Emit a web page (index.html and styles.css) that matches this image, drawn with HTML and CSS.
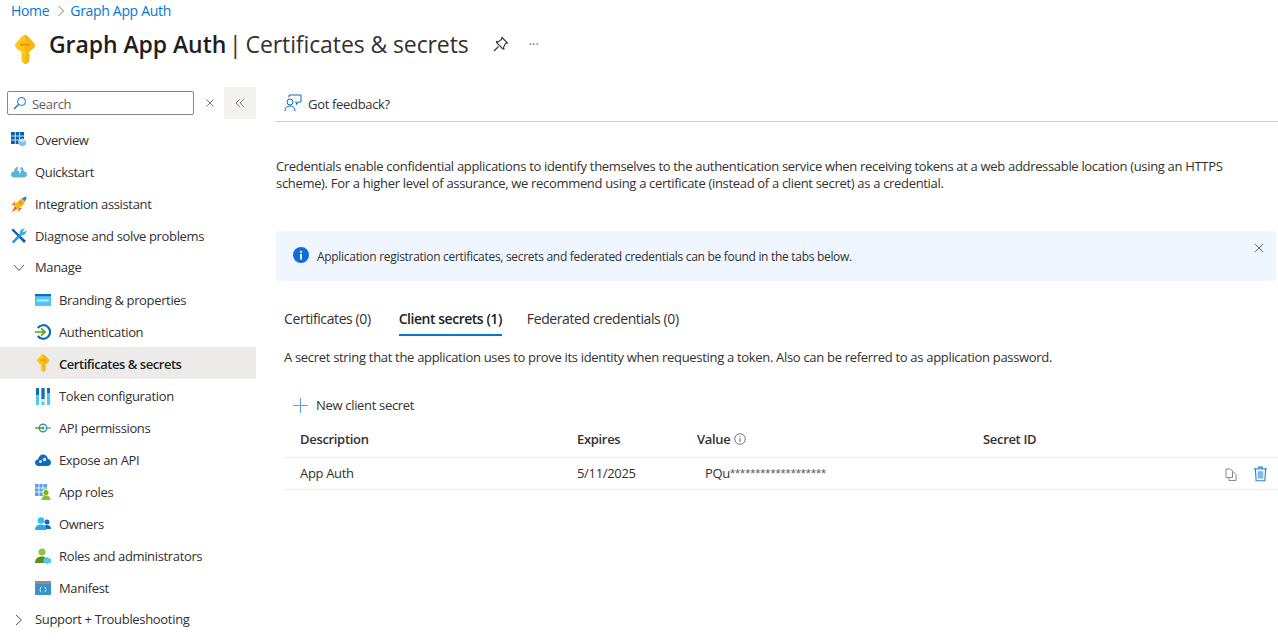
FILE: index.html
```html
<!DOCTYPE html>
<html lang="en">
<head>
<meta charset="utf-8">
<title>Graph App Auth | Certificates &amp; secrets</title>
<link rel="stylesheet" href="styles.css">
</head>
<body>
<svg class="defs" width="0" height="0" aria-hidden="true">
  <defs>
    <symbol id="key" viewBox="0 0 20 29">
      <path fill="#ffc61c" d="M10 0 C11 0 12 .6 13 1.600 L18.500 7.500 C20.500 9.700 20.500 11.500 18.500 13.300 C17 14.700 15.500 16 14 16.800 V19 L15 20.200 L14 21.500 L15 22.800 L14 24 V26.500 L11.500 29 H9.500 L6.500 26.500 V16.800 C4.500 16 3 14.700 1.500 13.300 C-.5 11.500 -.5 9.700 1.500 7.500 L7 1.600 C8 .6 9 0 10 0 Z"/>
      <path fill="#f6a70a" d="M10 0 C11 0 12 .6 13 1.600 L18.500 7.500 C20.500 9.700 20.500 11.500 18.500 13.300 C17 14.700 15.500 16 14 16.800 V19 L15 20.200 L14 21.500 L15 22.800 L14 24 V26.500 L11.500 29 H10 Z" opacity=".55"/>
      <rect x="5" y="8.500" width="10" height="2.500" fill="#e99f0a"/>
    </symbol>
  </defs>
</svg>

<header class="page-head">
  <nav class="crumbs">
    <a class="crumb">Home</a>
    <svg class="crumb-sep" viewBox="0 0 8 12"><path d="M1.500 1 L6.500 6 L1.500 11" fill="none" stroke="#777" stroke-width="1"/></svg>
    <a class="crumb">Graph App Auth</a>
  </nav>
  <div class="title-row">
    <svg class="title-key"><use href="#key"/></svg>
    <h1 class="title"><b class="title-app">Graph App Auth</b> <span class="title-sep">|</span> Certificates &amp; secrets</h1>
    <svg class="pin" viewBox="0 0 16 16"><path d="M1 15 L5.500 10.500 M9 1.500 L14.500 7 L12.500 7.500 L10.500 11.500 L11 13 L9.800 13 L3.500 6.500 L3.500 5.500 L5 6 L8.500 3.500 Z" fill="none" stroke="#333" stroke-width="1.100"/></svg>
    <span class="more">···</span>
  </div>
</header>

<div class="layout">
  <aside class="side">
    <div class="search-row">
      <div class="search">
        <svg class="search-ico" viewBox="0 0 14 14"><circle cx="8.500" cy="5.500" r="4" fill="none" stroke="#0f6cbd" stroke-width="1"/><path d="M5.500 8.500 L1 13" stroke="#0f6cbd" stroke-width="1.200"/></svg>
        <span class="search-text">Search</span>
      </div>
      <svg class="search-x" viewBox="0 0 10 10"><path d="M1.500 1.500 L8.500 8.500 M8.500 1.500 L1.500 8.500" stroke="#777" stroke-width="1"/></svg>
      <div class="collapse"><svg viewBox="0 0 10 10" width="10" height="10"><path d="M5 1 L1 5 L5 9 M9 1 L5 5 L9 9" fill="none" stroke="#888" stroke-width="1"/></svg></div>
    </div>

    <ul class="menu">
      <li class="item">
        <svg class="ico" viewBox="0 0 16 16"><rect x="0" y="0" width="13" height="12" fill="#0063b1"/><path d="M4.300 0V12M8.600 0V12M0 4H13M0 8H13" stroke="#fff" stroke-width=".8"/><path d="M11.500 6.500 L15.800 8.500 V13 L11.500 15 L7.500 13 V8.500 Z" fill="#fff"/><path d="M11.500 7.500 L15 9 V12.800 L11.500 14.500 L8 12.800 V9 Z" fill="#7fc3e8"/><path d="M8 9 L11.500 10.600 L15 9 L11.500 7.500 Z" fill="#b4e0f5"/></svg>
        <span>Overview</span>
      </li>
      <li class="item">
        <svg class="ico" viewBox="0 0 16 16"><path d="M3.500 13.500 C1.200 13.500 0 12 0 10.500 C0 8.800 1.300 7.500 3 7.500 C3.300 5 5 3 7 2.800 L6.500 7 H8.500 L8 10.500 L11 5.500 H9 L9.800 2.800 C11.500 3.300 12.700 5 13 7.500 C14.700 7.500 16 8.800 16 10.500 C16 12 14.800 13.500 12.500 13.500 Z" fill="#59b4d9"/></svg>
        <span>Quickstart</span>
      </li>
      <li class="item">
        <svg class="ico ico-tall" viewBox="0 0 16 17"><path d="M4 5.500 L.5 9 L4.500 9.500 Z M11 12 L7.500 16 L7 12 Z" fill="#f26d21"/><path d="M4 10 L6.500 12.500 L.5 16.500 Z" fill="#ef6c1a"/><path d="M15.500 .5 C11 1.500 6.500 4.500 3.500 9.500 L7 13 C12 10 15 6 15.500 .5 Z" fill="#fcb714"/><path d="M15.500 .5 C14 .8 12.500 1.400 11 2.300 L13.800 5.200 C14.800 3.800 15.300 2 15.500 .5 Z" fill="#1f7fd1"/><circle cx="9.500" cy="6.800" r="1.400" fill="#e88b00"/></svg>
        <span>Integration assistant</span>
      </li>
      <li class="item">
        <svg class="ico" viewBox="0 0 16 16"><path d="M1.500 3 L3 1.500 L15 13 L13 15 Z" fill="#0a5fa8"/><path d="M.5 2 L2 .5 L4 2.500 L2.500 4 Z" fill="#0a5fa8"/><path d="M2.500 15.500 L.8 13.800 L9 5.500 L10.800 7.300 Z" fill="#1f9bd7"/><path d="M9 6 C8 3 10.500 0 14 .8 L11.800 3 L13 4.200 L15.200 2 C16 5.500 13 8 10.500 7 Z" fill="#3cb1e4"/></svg>
        <span>Diagnose and solve problems</span>
      </li>
      <li class="item item-group">
        <svg class="chev" viewBox="0 0 12 8"><path d="M1 1 L6 6.500 L11 1" fill="none" stroke="#555" stroke-width="1"/></svg>
        <span>Manage</span>
      </li>
      <li class="item sub">
        <svg class="ico" viewBox="0 0 16 16"><rect x="0" y="2" width="16" height="12" fill="#50c7f0"/><rect x="0" y="2" width="16" height="2.200" fill="#0f6cbd"/><rect x="2" y="7.500" width="12" height="2" fill="#b8ecfa"/></svg>
        <span>Branding &amp; properties</span>
      </li>
      <li class="item sub">
        <svg class="ico" viewBox="0 0 16 16"><path d="M2.800 4 A6.800 6.800 0 1 1 2.800 12" fill="none" stroke="#0f6cbd" stroke-width="2.200"/><path d="M0 8 H9.500 M6 4.300 L10 8 L6 11.700" fill="none" stroke="#57a300" stroke-width="1.700"/></svg>
        <span>Authentication</span>
      </li>
      <li class="item sub item-on">
        <svg class="ico ico-key"><use href="#key"/></svg>
        <span>Certificates &amp; secrets</span>
      </li>
      <li class="item sub">
        <svg class="ico ico-tall" viewBox="0 0 16 17"><rect x="1" y="0" width="3" height="17" fill="#50c7f0"/><rect x="1" y="0" width="3" height="7" fill="#0f6cbd"/><rect x="6.500" y="0" width="3" height="17" fill="#50c7f0"/><rect x="6.500" y="0" width="3" height="11" fill="#0f6cbd"/><rect x="6.500" y="11" width="3" height="3" fill="#c7ecf8"/><rect x="12" y="0" width="3" height="17" fill="#50c7f0"/><rect x="12" y="0" width="3" height="5" fill="#0f6cbd"/></svg>
        <span>Token configuration</span>
      </li>
      <li class="item sub">
        <svg class="ico" viewBox="0 0 16 16"><path d="M10 8 H16" stroke="#3a9bd5" stroke-width="1.200"/><circle cx="8" cy="8" r="3.800" fill="#fff" stroke="#2f8fcf" stroke-width="1.400"/><path d="M0 8 H8" stroke="#57a300" stroke-width="1.500"/><circle cx="8" cy="8" r="1.500" fill="#57a300"/></svg>
        <span>API permissions</span>
      </li>
      <li class="item sub">
        <svg class="ico" viewBox="0 0 16 16"><path d="M3.500 14 C1 14 0 12 0 10.500 C0 8.500 1.500 7.500 3 7.500 C3.500 4.500 5.500 2.500 8 2.500 C10.500 2.500 12.500 4.500 13 7 C14.500 7 16 8.500 16 10.500 C16 12.500 14.500 14 12.500 14 Z" fill="#0f6cbd"/><circle cx="5.500" cy="9.500" r="1.500" fill="#c7ecf8"/><circle cx="9.500" cy="7.500" r="1.700" fill="#c7ecf8"/></svg>
        <span>Expose an API</span>
      </li>
      <li class="item sub">
        <svg class="ico" viewBox="0 0 16 16"><rect x="0" y="0" width="12" height="12" fill="#5e9ce6"/><path d="M4 0V12M8 0V12M0 4H12M0 8H12" stroke="#fff" stroke-width=".8"/><circle cx="11" cy="8.500" r="3.200" fill="#fff"/><circle cx="11" cy="8.500" r="2.500" fill="#7ab800"/><path d="M6.500 16 C6.500 13 8.500 11.500 11 11.500 C13.500 11.500 15.500 13 15.500 16 Z" fill="#86bf30"/></svg>
        <span>App roles</span>
      </li>
      <li class="item sub">
        <svg class="ico" viewBox="0 0 16 16"><circle cx="12" cy="6" r="2.500" fill="#0f6cbd"/><path d="M8 13 C8 10 10 9 12 9 C14 9 16 10 16 13 Z" fill="#0f6cbd"/><circle cx="6" cy="4.500" r="3.300" fill="#32bfe8"/><path d="M0 14 C0 10 3 8.500 6 8.500 C9 8.500 11.500 10 11.500 14 Z" fill="#32a8e0"/></svg>
        <span>Owners</span>
      </li>
      <li class="item sub">
        <svg class="ico" viewBox="0 0 16 16"><circle cx="7" cy="4" r="3.500" fill="#8cc63f"/><path d="M0 15 C0 10.500 3 8.500 7 8.500 C10 8.500 12 10 12.500 15 Z" fill="#5b8f1c"/><path d="M12 9 L16 11 V14.500 L12 16 L8.500 14.500 V11 Z" fill="#50c7f0"/></svg>
        <span>Roles and administrators</span>
      </li>
      <li class="item sub">
        <svg class="ico" viewBox="0 0 16 16"><rect x="0" y="1" width="16" height="14" fill="#3c91c6"/><rect x="0" y="1" width="16" height="3" fill="#8a8f94"/><path d="M6.500 7 L5.500 7.500 V9 L5 9.500 L5.500 10 V11.500 L6.500 12 M9.500 7 L10.500 7.500 V9 L11 9.500 L10.500 10 V11.500 L9.500 12" fill="none" stroke="#fff" stroke-width=".7"/></svg>
        <span>Manifest</span>
      </li>
      <li class="item item-group item-last">
        <svg class="chev chev-right" viewBox="0 0 8 12"><path d="M1 1 L6.500 6 L1 11" fill="none" stroke="#555" stroke-width="1"/></svg>
        <span>Support + Troubleshooting</span>
      </li>
    </ul>
  </aside>

  <main class="main">
    <div class="toolbar">
      <svg class="fb-ico" viewBox="0 0 18 18"><path d="M5 3.500 V1 H17 V8 H14.500 L12.500 10.500 V8 H11" fill="none" stroke="#0f6cbd" stroke-width="1"/><circle cx="6" cy="8" r="3" fill="none" stroke="#0f6cbd" stroke-width="1"/><path d="M1 17 C1 13.500 3 12 6 12 C9 12 11 13.500 11 17" fill="none" stroke="#0f6cbd" stroke-width="1"/></svg>
      <span>Got feedback?</span>
    </div>

    <p class="intro">Credentials enable confidential applications to identify themselves to the authentication service when receiving tokens at a web addressable location (using an HTTPS scheme). For a higher level of assurance, we recommend using a certificate (instead of a client secret) as a credential.</p>

    <div class="banner">
      <svg class="info" viewBox="0 0 16 16"><circle cx="8" cy="8" r="8" fill="#0f6cdc"/><rect x="7" y="7" width="2" height="5.500" fill="#fff"/><rect x="7" y="3.800" width="2" height="2" fill="#fff"/></svg>
      <span class="banner-text">Application registration certificates, secrets and federated credentials can be found in the tabs below.</span>
      <svg class="banner-x" viewBox="0 0 10 10"><path d="M1 1 L9 9 M9 1 L1 9" stroke="#666" stroke-width="1"/></svg>
    </div>

    <section class="panel">
      <div class="tabs">
        <span class="tab">Certificates (0)</span>
        <span class="tab tab-on">Client secrets (1)</span>
        <span class="tab">Federated credentials (0)</span>
      </div>
      <p class="tab-desc">A secret string that the application uses to prove its identity when requesting a token. Also can be referred to as application password.</p>
      <div class="new-btn">
        <svg class="plus" viewBox="0 0 16 16"><path d="M8 0 V16 M0 8 H16" stroke="#5aa5e4" stroke-width="1.300"/></svg>
        <span>New client secret</span>
      </div>
      <div class="row row-head">
        <span class="c1">Description</span>
        <span class="c2">Expires</span>
        <span class="c3">Value <svg class="val-info" viewBox="0 0 12 12"><circle cx="6" cy="6" r="5.300" fill="none" stroke="#666" stroke-width=".9"/><path d="M6 5 V9 M6 3 V4" stroke="#666" stroke-width="1"/></svg></span>
        <span class="c4">Secret ID</span>
      </div>
      <div class="row">
        <span class="c1">App Auth</span>
        <span class="c2">5/11/2025</span>
        <span class="c3 secret"><span>PQu<span class="stars">*******************</span></span></span>
        <span class="c4"></span>
        <span class="actions">
          <svg class="copy" viewBox="0 0 12 13"><path d="M1 1 H5.500 L7.500 3 V9.500 H1 Z M7.500 4 H8.500 L11 6.500 V12.500 H4 V9.500" fill="none" stroke="#8a8a8a" stroke-width="1"/></svg>
          <svg class="trash" viewBox="0 0 14 16"><path d="M0 2.500 H14" stroke="#1f82d6" stroke-width="1.200"/><path d="M5 2 V.6 H9 V2" fill="none" stroke="#1f82d6" stroke-width="1.200"/><path d="M1.500 2.500 L2.300 15.300 H11.700 L12.500 2.500" fill="none" stroke="#1f82d6" stroke-width="1.200"/><rect x="4" y="5" width="6" height="8" fill="#7db9ea"/></svg>
        </span>
      </div>
    </section>
  </main>
</div>
</body>
</html>
```
FILE: styles.css
```css
* { box-sizing: border-box; }
html, body { margin: 0; padding: 0; }
body {
  width: 1278px;
  height: 644px;
  overflow: hidden;
  background: #fff;
  color: #323130;
  font-family: "Open Sans", "Noto Sans", "Liberation Sans", sans-serif;
  font-size: 13px;
  letter-spacing: -0.32px;
  line-height: 17px;
}
.defs { position: absolute; }
p { margin: 0; }
ul { list-style: none; margin: 0; padding: 0; }

.page-head { height: 87px; padding: 1px 0 0 11px; }
.crumbs { display: flex; align-items: center; height: 19px; font-size: 14px; }
.crumb { color: #0078d4; }
.crumb-sep { width: 8px; height: 12px; margin: 0 5px 0 8px; }
.title-row { display: flex; align-items: center; height: 34px; margin-top: 7px; margin-left: 4px; }
.title-key { width: 20px; height: 29px; flex: none; margin-top: 11px; }
.title {
  margin: 0 0 0 14px;
  font-size: 23px;
  font-weight: 400;
  letter-spacing: -0.1px;
  line-height: 30px;
  color: #323130;
}
.title-app { font-weight: 600; color: #1f1e1d; letter-spacing: -0.07px; }
.title-sep { margin: 0 -2px 0 -3px; }
.pin { width: 16px; height: 16px; margin-left: 24px; }
.more { margin-left: 20px; color: #777; font-size: 13px; letter-spacing: 0; }

.layout { display: flex; }
.side { width: 256px; flex: none; }
.search-row { display: flex; align-items: center; height: 32px; padding-left: 7px; }
.search {
  display: flex;
  align-items: center;
  width: 187px;
  height: 24px;
  border: 1px solid #8a8886;
  border-radius: 2px;
  padding-left: 5px;
}
.search-ico { width: 14px; height: 14px; flex: none; }
.search-text { margin-left: 5px; margin-top: 2px; color: #605e5c; }
.search-x { width: 10px; height: 10px; margin-left: 11px; }
.collapse {
  display: flex;
  align-items: center;
  justify-content: center;
  width: 32px;
  height: 32px;
  margin-left: 9px;
  background: #f3f2f1;
}

.menu { margin-top: 5px; }
.item { display: flex; align-items: center; height: 32px; padding-left: 11px; white-space: nowrap; letter-spacing: -0.35px; }
.item > span { margin-left: 8px; }
.ico { width: 16px; height: 16px; flex: none; }
.ico-tall { height: 17px; }
.ico-key { width: 12px; height: 18px; margin: -3px 2px 0; }
.chev { width: 12px; height: 8px; flex: none; margin: 0 2px; }
.chev-right { width: 8px; height: 12px; margin: 0 4px; }
.item-group { height: 31px; }
.item-last { height: 33px; letter-spacing: -0.32px; }
.sub { padding-left: 35px; padding-top: 2px; }
.item-on { background: #edebe9; color: #201f1e; }
.item-on > span { font-weight: 600; letter-spacing: -0.46px; }

.main { flex: 1; min-width: 0; padding-left: 20px; }
.toolbar {
  display: flex;
  align-items: center;
  height: 35px;
  padding: 0 0 0 8px;
  border-bottom: 1px solid #d2d0ce;
}
.fb-ico { width: 18px; height: 18px; flex: none; margin-top: -3px; }
.toolbar span { margin-left: 6px; }
.intro { margin-top: 36px; padding-right: 40px; width: 1000px; }
.banner {
  display: flex;
  align-items: center;
  width: 1000px;
  height: 50px;
  margin-top: 39px;
  padding-left: 17px;
  background: #eff6ff;
  border-radius: 2px;
  position: relative;
}
.info { width: 16px; height: 16px; flex: none; margin-top: -2px; }
.banner-text { margin-left: 8px; font-size: 12px; letter-spacing: -0.3px; }
.banner-x { position: absolute; right: 12px; top: 12px; width: 10px; height: 10px; }

.panel { padding-left: 8px; }
.tabs { display: flex; height: 33px; margin-top: 23px; align-items: flex-start; padding-top: 6px; gap: 28px; font-size: 14px; letter-spacing: -0.4px; }
.tab { height: 26px; }
.tab-on { color: #201f1e; font-weight: 600; letter-spacing: -0.47px; margin-right: -3px; border-bottom: 2px solid #0078d4; }
.tab-desc { margin-top: 12px; letter-spacing: -0.31px; }
.new-btn { display: flex; align-items: center; height: 32px; margin-top: 23px; padding-left: 9px; }
.plus { width: 15px; height: 15px; flex: none; }
.new-btn span { margin-left: 8px; }
.row {
  display: flex;
  align-items: center;
  height: 32px;
  padding-left: 16px;
  border-bottom: 1px solid #edebe9;
  position: relative;
}
.row-head { height: 37px; font-weight: 600; }
.c1 { width: 277px; }
.c2 { width: 120px; }
.c3 { width: 286px; display: flex; align-items: center; gap: 4px; }
.c4 { width: 200px; }
.val-info { width: 12px; height: 12px; }
.secret { padding-left: 8px; }
.stars { font-family: "Liberation Sans", sans-serif; letter-spacing: 0; color: #605e5c; }
.actions { position: absolute; right: 11px; top: 8px; display: flex; align-items: center; gap: 17px; }
.copy { width: 12px; height: 13px; }
.trash { width: 13px; height: 16px; }
```
